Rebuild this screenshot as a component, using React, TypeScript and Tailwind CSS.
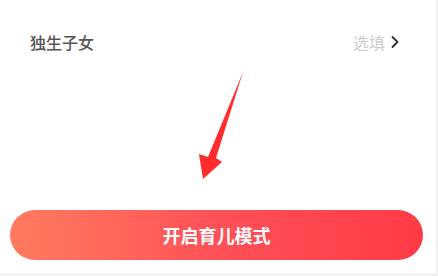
import { ChevronRight } from 'lucide-react';

const font = { fontFamily: '"Noto Sans CJK SC", "Noto Sans", sans-serif' };

export default function App() {
  return (
    <div className="w-[438px] h-[276px] bg-[#f2f2f2] overflow-hidden" style={font}>
      <div className="relative w-[436px] h-[273px] bg-white flex flex-col">
        {/* Row */}
        <div className="flex items-center h-[28px] mt-[28px] pl-[30px] pr-[31px]">
          <span className="text-[16px] text-[#555555] font-medium">独生子女</span>
          <span className="ml-auto text-[16px] text-[#cccccc]">选填</span>
          <ChevronRight size={20} strokeWidth={2.2} className="text-[#333333]" />
        </div>

        {/* annotation arrow */}
        <svg className="absolute left-0 top-0" width="436" height="273" viewBox="0 0 436 273">
          <polygon
            points="243,72 216,158 222,162 203,179 199,154 208,157"
            fill="#ff2d2d"
          />
        </svg>

        <div className="flex-1" />

        {/* Button */}
        <div className="px-[10px] pb-[13px]">
          <button className="w-[413px] h-[50px] rounded-full bg-gradient-to-r from-[#ff7a5e] via-[#ff5058] to-[#ff3a46] text-white text-[18px] font-bold flex items-center justify-center">
            开启育儿模式
          </button>
        </div>
      </div>
    </div>
  );
}
